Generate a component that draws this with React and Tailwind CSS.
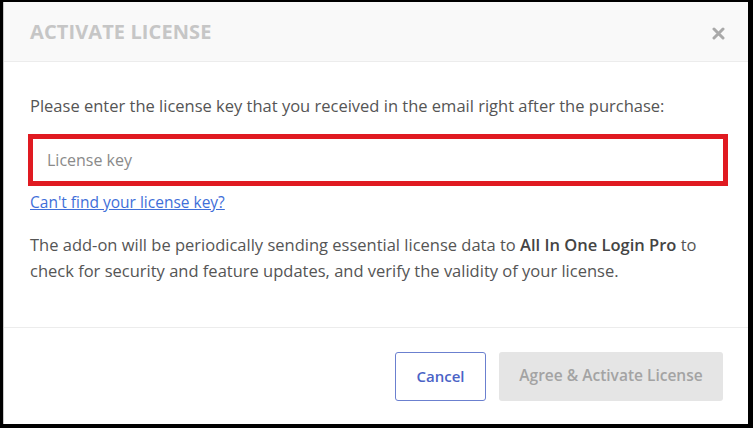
export default function App() {
  return (
    <div
      className="w-[753px] h-[428px] bg-black pt-[2px] pl-[3px] pr-[5px] pb-[4px]"
      style={{ fontFamily: '"Open Sans", "Noto Sans", sans-serif' }}
    >
      <div className="flex h-full flex-col border-l border-[#c9c9c9] bg-white">
        {/* header */}
        <div className="flex h-[60px] items-center justify-between border-b border-[#ececec] bg-[#f9f9f9] pl-[26px] pr-[23px]">
          <h2 className="text-[20px] font-bold uppercase tracking-[0.1px] text-[#c6c6c6]">
            Activate License
          </h2>
          <svg width="13" height="13" viewBox="0 0 13 13" className="mt-[3px]">
            <path d="M2 2 L11 11 M11 2 L2 11" stroke="#a9a9a9" strokeWidth="3" strokeLinecap="round" />
          </svg>
        </div>

        {/* body */}
        <div className="flex-1 border-b border-[#ececec] pl-[26px] pt-[33px] text-[16.5px] text-[#555]">
          <p className="leading-[22px]">
            Please enter the license key that you received in the email right after the purchase:
          </p>
          <div className="-ml-[2px] mt-[17px] flex h-[52px] w-[700px] items-center border-[5px] border-[#e01a21] pl-[14px]">
            <span className="text-[16px] text-[#8a8a8a]">License key</span>
          </div>
          <a href="#" className="mt-[5px] block text-[15.5px] leading-[22px] text-[#3f6fd9] underline">
            Can't find your license key?
          </a>
          <p className="mt-[19px] leading-[26px]">
            The add-on will be periodically sending essential license data to{" "}
            <b className="font-semibold text-[#444]">All In One Login Pro</b> to
            <br />
            check for security and feature updates, and verify the validity of your license.
          </p>
        </div>

        {/* footer */}
        <div className="flex h-[96px] items-center justify-end gap-[13px] pr-[25px]">
          <button className="h-[49px] w-[91px] rounded-[3px] border border-[#6b80cf] text-[15px] font-semibold text-[#4b63c6]">
            Cancel
          </button>
          <button className="h-[49px] w-[224px] rounded-[3px] bg-[#e5e5e5] text-[15.5px] font-semibold text-[#a3a3a3]">
            Agree &amp; Activate License
          </button>
        </div>
      </div>
    </div>
  );
}
